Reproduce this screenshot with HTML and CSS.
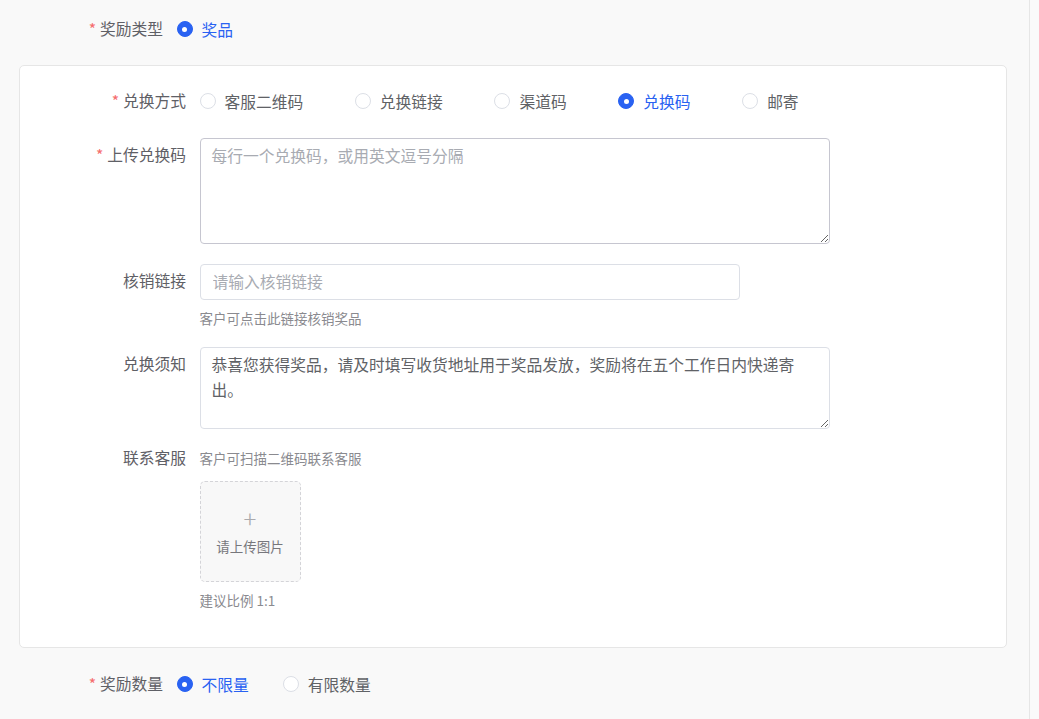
FILE: index.html
```html
<!DOCTYPE html>
<html lang="zh-CN">
<head>
  <meta charset="UTF-8">
  <meta name="viewport" content="width=device-width, initial-scale=1.0">
  <title>奖励设置</title>
  <link rel="stylesheet" href="styles.css">
</head>
<body>
  <div class="page">
    <div class="item">
      <div class="label"><span class="star">*</span>奖励类型</div>
      <div class="content">
        <div class="radios tight">
          <label class="radio checked"><span class="dot"></span>奖品</label>
        </div>
      </div>
    </div>

    <div class="card">
      <div class="item">
        <div class="label"><span class="star">*</span>兑换方式</div>
        <div class="content">
          <div class="radios">
            <label class="radio"><span class="dot"></span>客服二维码</label>
            <label class="radio"><span class="dot"></span>兑换链接</label>
            <label class="radio"><span class="dot"></span>渠道码</label>
            <label class="radio checked"><span class="dot"></span>兑换码</label>
            <label class="radio"><span class="dot"></span>邮寄</label>
          </div>
        </div>
      </div>

      <div class="item mt18">
        <div class="label"><span class="star">*</span>上传兑换码</div>
        <div class="content">
          <textarea class="area codes" placeholder="每行一个兑换码，或用英文逗号分隔"></textarea>
        </div>
      </div>

      <div class="item mt20">
        <div class="label">核销链接</div>
        <div class="content">
          <input class="input" type="text" placeholder="请输入核销链接">
          <div class="hint">客户可点击此链接核销奖品</div>
        </div>
      </div>

      <div class="item mt18">
        <div class="label">兑换须知</div>
        <div class="content">
          <textarea class="area notice">恭喜您获得奖品，请及时填写收货地址用于奖品发放，奖励将在五个工作日内快递寄出。</textarea>
        </div>
      </div>

      <div class="item mt12">
        <div class="label">联系客服</div>
        <div class="content">
          <div class="inline-hint">客户可扫描二维码联系客服</div>
          <div class="upload">
            <span class="plus">+</span>
            <span class="upload-text">请上传图片</span>
          </div>
          <div class="hint">建议比例 1:1</div>
        </div>
      </div>
    </div>

    <div class="item bottom">
      <div class="label"><span class="star">*</span>奖励数量</div>
      <div class="content">
        <div class="radios tight">
          <label class="radio checked"><span class="dot"></span>不限量</label>
          <label class="radio"><span class="dot"></span>有限数量</label>
        </div>
      </div>
    </div>
  </div>
</body>
</html>
```

FILE: styles.css
```css
*{margin: 0; padding: 0; box-sizing: border-box;}

body{
  font-family: "Noto Sans CJK SC", "Noto Sans", sans-serif;
  font-size: 15.75px;
  color: #606266;
  background: #fafafa;
}

.page{
  width: 1030px;
  min-height: 100vh;
  padding: 12px 0 0 19px;
  background: #f9f9f9;
  border-right: 1px solid #e6e6e6;
}

.item{
  display: flex;
  align-items: flex-start;
}

.label{
  width: 157.5px;
  flex: none;
  padding-right: 13.5px;
  padding-bottom: 2px;
  text-align: right;
  line-height: 34px;
  color: #5f6066;
}

.star{
  color: #f56c6c;
  margin-right: 4px;
}

.content{
  flex: 1;
}

.radios{
  display: flex;
  align-items: center;
  height: 36px;
  padding-bottom: 2px;
}

.radio{
  display: flex;
  align-items: center;
  margin-right: 51.6px;
  cursor: pointer;
}

.radios.tight .radio{
  margin-right: 34px;
}

.dot{
  width: 16px;
  height: 16px;
  border: 1px solid #dcdfe6;
  border-radius: 50%;
  background: #fff;
  margin-right: 9px;
  position: relative;
}

.radio.checked{
  color: #2962f2;
}

.radio.checked .dot{
  background: #2962f2;
  border-color: #2962f2;
}

.radio.checked .dot::after{
  content: "";
  position: absolute;
  left: 50%;
  top: 50%;
  width: 5px;
  height: 5px;
  margin: -2.5px 0 0 -2.5px;
  border-radius: 50%;
  background: #fff;
}

.card{
  width: 988px;
  margin-top: 17px;
  padding: 18px 0 36px 22px;
  background: #fff;
  border: 1px solid #e6e6e6;
  border-radius: 5px;
}

.mt18{ margin-top: 18px; }
.mt20{ margin-top: 20px; }
.mt12{ margin-top: 12px; }

.area{
  display: block;
  width: 630px;
  padding: 5px 11px 7px;
  font-family: inherit;
  font-size: 15.75px;
  line-height: 24.5px;
  color: #606266;
  border: 1px solid #dcdfe6;
  border-radius: 4px;
  outline: none;
  resize: vertical;
  background: #fff;
}

.area.codes{
  height: 106px;
  border-color: #c6c6d0;
}

.area.notice{
  height: 82px;
}

.area::placeholder,
.input::placeholder{
  color: #a8abb2;
}

.input{
  display: block;
  width: 540px;
  height: 36px;
  padding: 0 12px 2px;
  font-family: inherit;
  font-size: 15.75px;
  color: #606266;
  border: 1px solid #dcdfe6;
  border-radius: 4px;
  outline: none;
}

.hint{
  margin-top: 8px;
  padding-bottom: 1px;
  font-size: 13.5px;
  line-height: 20px;
  color: #8a8a8f;
}

.inline-hint{
  font-size: 13.5px;
  line-height: 34px;
  padding-bottom: 2px;
  color: #8a8a8f;
}

.upload{
  width: 101px;
  height: 101px;
  margin-top: 4px;
  border: 1px dashed #d4d4d8;
  border-radius: 5px;
  background: #f8f8f8;
  display: flex;
  flex-direction: column;
  align-items: center;
}

.plus{
  margin-top: 23px;
  font-size: 24px;
  line-height: 26px;
  font-weight: 300;
  color: #aaaaae;
}

.upload-text{
  margin-top: 5px;
  font-size: 13.5px;
  line-height: 20px;
  color: #77777c;
}

.bottom{
  margin-top: 19px;
}
```
